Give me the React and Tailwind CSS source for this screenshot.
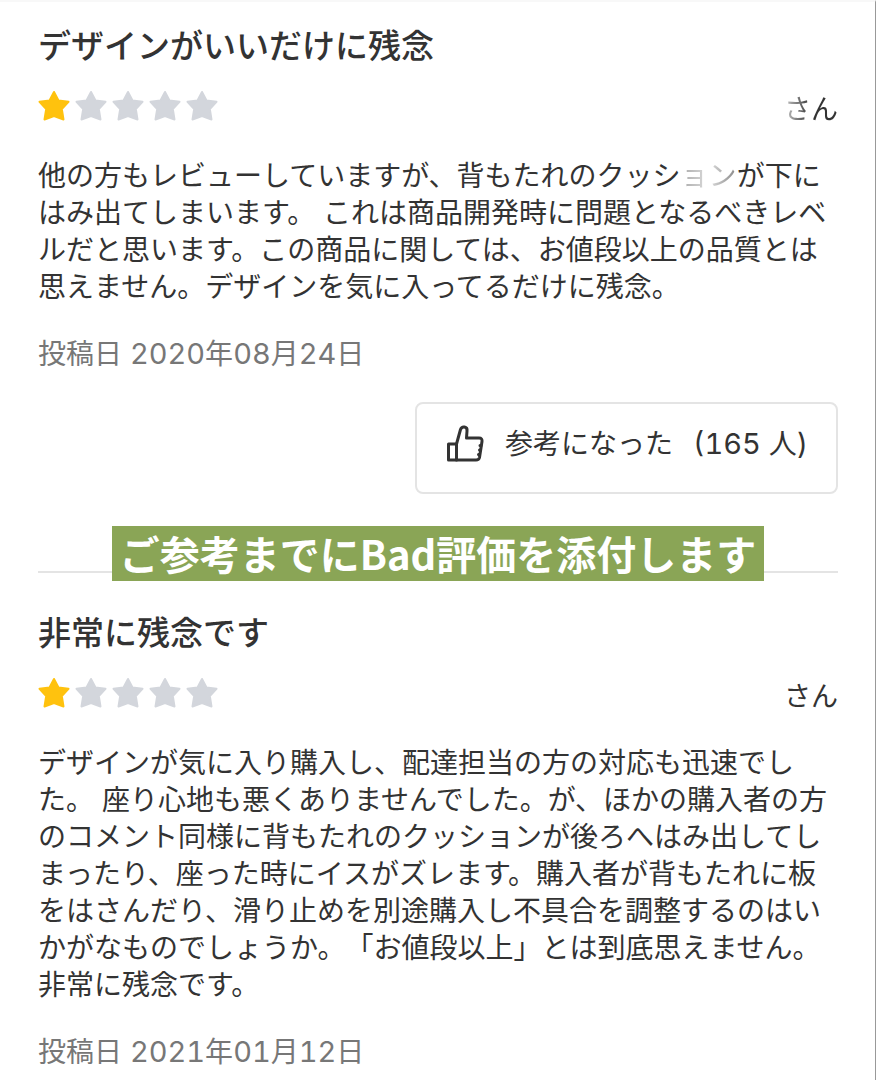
import React from 'react';

const reviews = [
    {
        id: 1,
        title: 'デザインがいいだけに残念',
        rating: 1,
        fadedName: true,
        body: [
            '他の方もレビューしていますが、背もたれのクッションが下に',
            'はみ出てしまいます。 これは商品開発時に問題となるべきレベ',
            'ルだと思います。この商品に関しては、お値段以上の品質とは',
            '思えません。デザインを気に入ってるだけに残念。',
        ],
        faded: 'ョン',
        date: ['2020', '08', '24'],
        helpful: 165,
    },
    {
        id: 2,
        title: '非常に残念です',
        rating: 1,
        body: [
            'デザインが気に入り購入し、配達担当の方の対応も迅速でし',
            'た。 座り心地も悪くありませんでした。が、ほかの購入者の方',
            'のコメント同様に背もたれのクッションが後ろへはみ出してし',
            'まったり、座った時にイスがズレます。購入者が背もたれに板',
            'をはさんだり、滑り止めを別途購入し不具合を調整するのはい',
            'かがなものでしょうか。「お値段以上」とは到底思えません。',
            '非常に残念です。',
        ],
        date: ['2021', '01', '12'],
    },
];

const Star = ({ filled }) => (
    <svg viewBox="0 0 32 32" className={filled ? 'size-8 text-[#ffc20e]' : 'size-8 text-[#d3d6dc]'} aria-hidden="true">
        <path
            d="M16 2L20.500 10.500 30.500 11.800 23.800 19 25.500 29.500 16 26 6.500 29.500 8.200 19 1.500 11.800 11.500 10.500z"
            fill="currentColor"
            stroke="currentColor"
            strokeWidth="2"
            strokeLinejoin="round"
        />
    </svg>
);

const ThumbIcon = () => (
    <svg viewBox="0 0 40 40" className="size-10" fill="none" stroke="currentColor" strokeWidth="3" strokeLinejoin="round" strokeLinecap="round" aria-hidden="true">
        <path d="M3.500 20h8v16h-8z" />
        <path d="M11.500 20L15.500 5.500Q16.500 2.500 19.500 3 22.500 3.500 22 7L21.500 14H34Q37.500 14 37 17.500L34.500 33.500Q34 36 31 36H11.500" />
        <path d="M36 21.500h-1M35.500 26h-1M34.500 30.500h-1" />
    </svg>
);

// Digits run a little larger than the kanji around them
const Num = ({ children }) => <span className="text-[29px] leading-none tabular-nums">{children}</span>;

// A line whose `faded` part is washed out towards white
const Line = ({ text, faded }) => {
    if (!faded || !text.includes(faded)) {
        return <span className="block">{text}</span>;
    }
    const [before, after] = text.split(faded);
    return (
        <span className="block">
            {before}
            <span className="bg-linear-to-r from-[#aaaaaa] via-[#dddddd] to-[#888888] bg-clip-text text-transparent">{faded}</span>
            {after}
        </span>
    );
};

const Review = ({ review }) => {
    const [year, month, day] = review.date;
    return (
        <article className="flex flex-col">
            <h2 className="text-[33px] leading-12 font-medium">{review.title}</h2>
            <div className="mt-3 flex h-12 items-center justify-between">
                <div className="flex gap-[5px]" role="img" aria-label={`${review.rating} / 5`}>
                    {[1, 2, 3, 4, 5].map((n) => (
                        <Star key={n} filled={n <= review.rating} />
                    ))}
                </div>
                <span className="pt-2 text-[27px]">
                    {review.fadedName ? (
                        <span className="bg-linear-to-r from-[#cccccc] to-[#333333] to-50% bg-clip-text text-transparent">さん</span>
                    ) : (
                        'さん'
                    )}
                </span>
            </div>
            <p className="mt-7 text-[28px] leading-[37px] whitespace-nowrap">
                {review.body.map((line) => (
                    <Line key={line} text={line} faded={review.faded} />
                ))}
            </p>
            <p className="mt-7 text-[28px] leading-10 text-[#777777]">
                投稿日 <Num>{year}</Num>年<Num>{month}</Num>月<Num>{day}</Num>日
            </p>
            {review.helpful && (
                <button type="button" className="mt-7 flex h-[92px] items-center self-end rounded-lg border-2 border-[#e4e4e4] px-7 pb-2 text-[28px]">
                    <ThumbIcon />
                    <span className="ml-5">参考になった</span>
                    <span className="ml-5">
                        <Num>({review.helpful} </Num>人<Num>)</Num>
                    </span>
                </button>
            )}
        </article>
    );
};

const App = () => {
    return (
        <main className="min-h-screen border-t-2 border-r border-t-[#f8f8f8] border-r-[#999999] bg-white pt-5 pr-[37px] pl-[38px] font-['Inter','Noto_Sans_CJK_JP',sans-serif] text-[#333333] [text-spacing-trim:space-all]">
            <Review review={reviews[0]} />
            <div className="relative mt-8 flex justify-center">
                <div className="absolute inset-x-0 bottom-2 border-t-2 border-[#e4e4e4]" />
                <p className="relative bg-[#8aa556] px-2 font-['Noto_Sans_CJK_JP',sans-serif] text-[40px] leading-[55px] font-bold whitespace-nowrap text-white">
                    ご参考までにBad評価を添付します
                </p>
            </div>
            <div className="mt-7">
                <Review review={reviews[1]} />
            </div>
        </main>
    );
};

export default App;
